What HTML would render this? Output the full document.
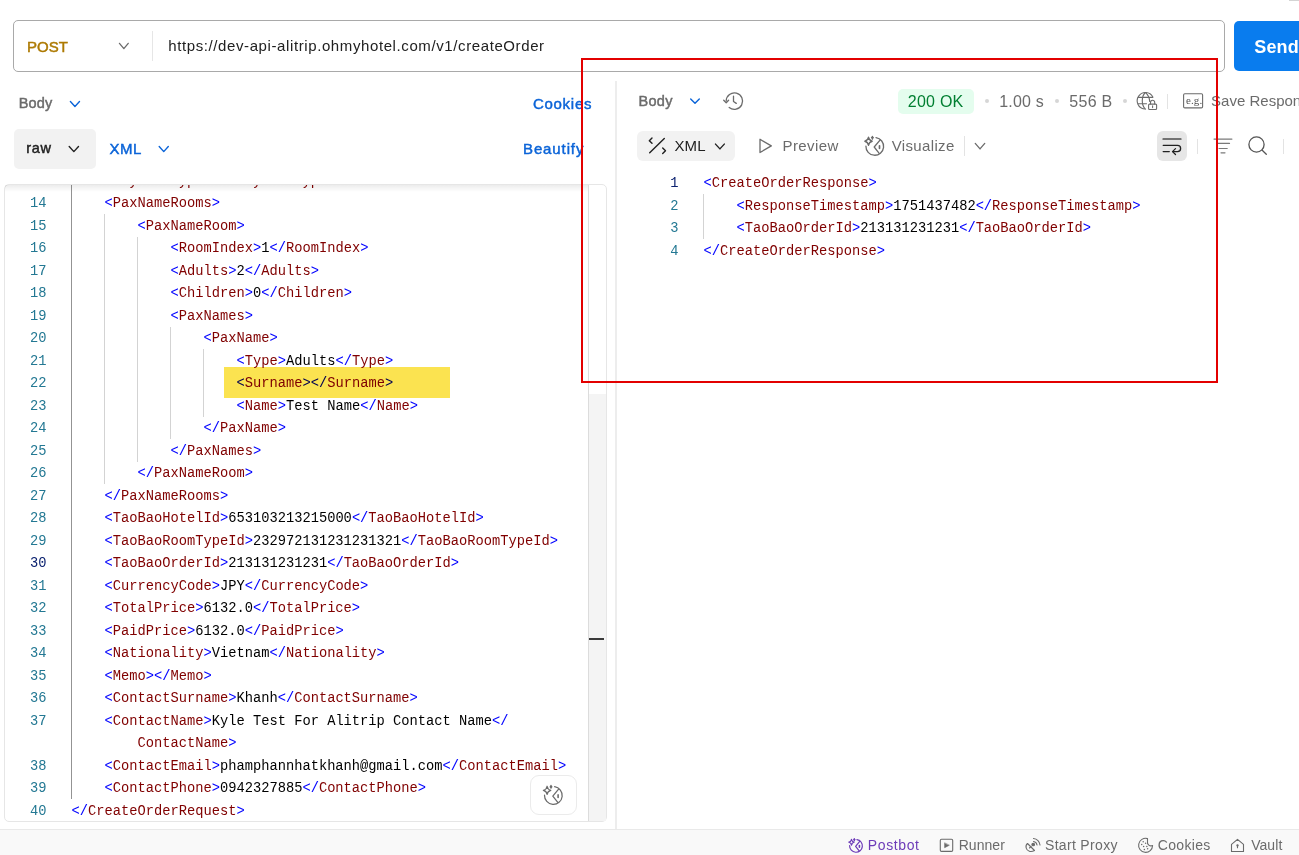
<!DOCTYPE html><html><head><meta charset="utf-8"><style>
html,body{margin:0;padding:0;}
body{width:1299px;height:855px;position:relative;overflow:hidden;background:#fff;font-family:"Liberation Sans",sans-serif;}
.t{position:absolute;white-space:nowrap;}
.m{position:absolute;white-space:pre;font-family:"Liberation Mono",monospace;font-size:13.743px;line-height:22.5px;height:22.5px;}
.ic{position:absolute;left:0;top:0;pointer-events:none;}
</style></head><body>
<div style="position:absolute;left:1289px;top:0px;width:10px;height:1px;background:#d4d4d4;"></div>
<div style="position:absolute;left:13px;top:20px;width:1212px;height:52px;box-sizing:border-box;border:1px solid #a9a9a9;border-radius:5px;background:#fff;"></div>
<div class="t" style="left:26.89px;top:39px;font-size:15px;line-height:15px;color:#ad7a03;letter-spacing:0.062px;-webkit-text-stroke:0.45px #ad7a03;">POST</div>
<svg class="ic" width="1299" height="855" viewBox="0 0 1299 855" fill="none" stroke="#6b6b6b" stroke-width="1.3" stroke-linecap="round" stroke-linejoin="round"><path d="M119.45 43.35 L123.85 48.65 L128.25 43.35"/></svg>
<div style="position:absolute;left:152px;top:31px;width:1px;height:30px;background:#e6e6e6;"></div>
<div class="t" style="left:168.25px;top:38px;font-size:15px;line-height:15px;color:#212121;letter-spacing:0.602px;">https://dev-api-alitrip.ohmyhotel.com/v1/createOrder</div>
<div style="position:absolute;left:1234px;top:21px;width:70px;height:50px;background:#097cee;border-radius:5px;"></div>
<div class="t" style="left:1254.36px;top:38px;font-size:18px;line-height:18px;color:#ffffff;font-weight:700;letter-spacing:0.100px;">Send</div>
<div class="t" style="left:18.63px;top:96px;font-size:14.5px;line-height:14.5px;color:#6b6b6b;letter-spacing:0.174px;-webkit-text-stroke:0.45px #6b6b6b;">Body</div>
<svg class="ic" width="1299" height="855" viewBox="0 0 1299 855" fill="none" stroke="#0b64d8" stroke-width="1.4" stroke-linecap="round" stroke-linejoin="round"><path d="M70.40 101.60 L74.95 106.40 L79.50 101.60"/></svg>
<div class="t" style="left:532.88px;top:96px;font-size:15px;line-height:15px;color:#0b64d8;letter-spacing:0.740px;-webkit-text-stroke:0.45px #0b64d8;">Cookies</div>
<div style="position:absolute;left:14px;top:129px;width:82px;height:40px;background:#f2f2f2;border-radius:5px;"></div>
<div class="t" style="left:26.28px;top:141px;font-size:14.5px;line-height:14.5px;color:#212121;letter-spacing:0.637px;-webkit-text-stroke:0.45px #212121;">raw</div>
<svg class="ic" width="1299" height="855" viewBox="0 0 1299 855" fill="none" stroke="#212121" stroke-width="1.4" stroke-linecap="round" stroke-linejoin="round"><path d="M69.20 146.50 L73.85 151.60 L78.50 146.50"/></svg>
<div class="t" style="left:109.59px;top:141px;font-size:15px;line-height:15px;color:#0b64d8;letter-spacing:0.425px;-webkit-text-stroke:0.45px #0b64d8;">XML</div>
<svg class="ic" width="1299" height="855" viewBox="0 0 1299 855" fill="none" stroke="#0b64d8" stroke-width="1.4" stroke-linecap="round" stroke-linejoin="round"><path d="M159.20 146.50 L163.75 151.60 L168.30 146.50"/></svg>
<div class="t" style="left:522.99px;top:141px;font-size:15px;line-height:15px;color:#0b64d8;letter-spacing:0.891px;-webkit-text-stroke:0.45px #0b64d8;">Beautify</div>
<div style="position:absolute;left:615px;top:81px;width:2px;height:748px;background:#ededed;"></div>
<div style="position:absolute;left:4px;top:184px;width:603px;height:638px;box-sizing:border-box;border:1px solid #e6e6e6;border-radius:5px;background:#fff;"></div>
<div style="position:absolute;left:5px;top:185px;width:583px;height:636px;overflow:hidden;">
<div style="position:absolute;left:66px;top:0.0px;width:1px;height:614.1px;background:#939393;"></div>
<div style="position:absolute;left:99px;top:29.1px;width:1px;height:270.0px;background:#d3d3d3;"></div>
<div style="position:absolute;left:132px;top:51.6px;width:1px;height:225.0px;background:#d3d3d3;"></div>
<div style="position:absolute;left:165px;top:141.6px;width:1px;height:112.5px;background:#d3d3d3;"></div>
<div style="position:absolute;left:198px;top:164.1px;width:1px;height:67.5px;background:#d3d3d3;"></div>
<div class="m" style="left:-18.50px;top:-14.41px;width:60px;text-align:right;color:#237893;">13</div>
<div class="m" style="left:99.59px;top:-14.41px;"><span style="color:#0000ff">&lt;</span><span style="color:#800000">PaymentType</span><span style="color:#0000ff">&gt;</span><span style="color:#000000">1</span><span style="color:#0000ff">&lt;/</span><span style="color:#800000">PaymentType</span><span style="color:#0000ff">&gt;</span></div>
<div class="m" style="left:-18.50px;top:8.09px;width:60px;text-align:right;color:#237893;">14</div>
<div class="m" style="left:99.59px;top:8.09px;"><span style="color:#0000ff">&lt;</span><span style="color:#800000">PaxNameRooms</span><span style="color:#0000ff">&gt;</span></div>
<div class="m" style="left:-18.50px;top:30.59px;width:60px;text-align:right;color:#237893;">15</div>
<div class="m" style="left:132.58px;top:30.59px;"><span style="color:#0000ff">&lt;</span><span style="color:#800000">PaxNameRoom</span><span style="color:#0000ff">&gt;</span></div>
<div class="m" style="left:-18.50px;top:53.09px;width:60px;text-align:right;color:#237893;">16</div>
<div class="m" style="left:165.57px;top:53.09px;"><span style="color:#0000ff">&lt;</span><span style="color:#800000">RoomIndex</span><span style="color:#0000ff">&gt;</span><span style="color:#000000">1</span><span style="color:#0000ff">&lt;/</span><span style="color:#800000">RoomIndex</span><span style="color:#0000ff">&gt;</span></div>
<div class="m" style="left:-18.50px;top:75.59px;width:60px;text-align:right;color:#237893;">17</div>
<div class="m" style="left:165.57px;top:75.59px;"><span style="color:#0000ff">&lt;</span><span style="color:#800000">Adults</span><span style="color:#0000ff">&gt;</span><span style="color:#000000">2</span><span style="color:#0000ff">&lt;/</span><span style="color:#800000">Adults</span><span style="color:#0000ff">&gt;</span></div>
<div class="m" style="left:-18.50px;top:98.09px;width:60px;text-align:right;color:#237893;">18</div>
<div class="m" style="left:165.57px;top:98.09px;"><span style="color:#0000ff">&lt;</span><span style="color:#800000">Children</span><span style="color:#0000ff">&gt;</span><span style="color:#000000">0</span><span style="color:#0000ff">&lt;/</span><span style="color:#800000">Children</span><span style="color:#0000ff">&gt;</span></div>
<div class="m" style="left:-18.50px;top:120.59px;width:60px;text-align:right;color:#237893;">19</div>
<div class="m" style="left:165.57px;top:120.59px;"><span style="color:#0000ff">&lt;</span><span style="color:#800000">PaxNames</span><span style="color:#0000ff">&gt;</span></div>
<div class="m" style="left:-18.50px;top:143.09px;width:60px;text-align:right;color:#237893;">20</div>
<div class="m" style="left:198.55px;top:143.09px;"><span style="color:#0000ff">&lt;</span><span style="color:#800000">PaxName</span><span style="color:#0000ff">&gt;</span></div>
<div class="m" style="left:-18.50px;top:165.59px;width:60px;text-align:right;color:#237893;">21</div>
<div class="m" style="left:231.54px;top:165.59px;"><span style="color:#0000ff">&lt;</span><span style="color:#800000">Type</span><span style="color:#0000ff">&gt;</span><span style="color:#000000">Adults</span><span style="color:#0000ff">&lt;/</span><span style="color:#800000">Type</span><span style="color:#0000ff">&gt;</span></div>
<div class="m" style="left:-18.50px;top:188.09px;width:60px;text-align:right;color:#237893;">22</div>
<div class="m" style="left:231.54px;top:188.09px;"><span style="color:#0000ff">&lt;</span><span style="color:#800000">Surname</span><span style="color:#0000ff">&gt;&lt;/</span><span style="color:#800000">Surname</span><span style="color:#0000ff">&gt;</span></div>
<div class="m" style="left:-18.50px;top:210.59px;width:60px;text-align:right;color:#237893;">23</div>
<div class="m" style="left:231.54px;top:210.59px;"><span style="color:#0000ff">&lt;</span><span style="color:#800000">Name</span><span style="color:#0000ff">&gt;</span><span style="color:#000000">Test Name</span><span style="color:#0000ff">&lt;/</span><span style="color:#800000">Name</span><span style="color:#0000ff">&gt;</span></div>
<div class="m" style="left:-18.50px;top:233.09px;width:60px;text-align:right;color:#237893;">24</div>
<div class="m" style="left:198.55px;top:233.09px;"><span style="color:#0000ff">&lt;/</span><span style="color:#800000">PaxName</span><span style="color:#0000ff">&gt;</span></div>
<div class="m" style="left:-18.50px;top:255.59px;width:60px;text-align:right;color:#237893;">25</div>
<div class="m" style="left:165.57px;top:255.59px;"><span style="color:#0000ff">&lt;/</span><span style="color:#800000">PaxNames</span><span style="color:#0000ff">&gt;</span></div>
<div class="m" style="left:-18.50px;top:278.09px;width:60px;text-align:right;color:#237893;">26</div>
<div class="m" style="left:132.58px;top:278.09px;"><span style="color:#0000ff">&lt;/</span><span style="color:#800000">PaxNameRoom</span><span style="color:#0000ff">&gt;</span></div>
<div class="m" style="left:-18.50px;top:300.59px;width:60px;text-align:right;color:#237893;">27</div>
<div class="m" style="left:99.59px;top:300.59px;"><span style="color:#0000ff">&lt;/</span><span style="color:#800000">PaxNameRooms</span><span style="color:#0000ff">&gt;</span></div>
<div class="m" style="left:-18.50px;top:323.09px;width:60px;text-align:right;color:#237893;">28</div>
<div class="m" style="left:99.59px;top:323.09px;"><span style="color:#0000ff">&lt;</span><span style="color:#800000">TaoBaoHotelId</span><span style="color:#0000ff">&gt;</span><span style="color:#000000">653103213215000</span><span style="color:#0000ff">&lt;/</span><span style="color:#800000">TaoBaoHotelId</span><span style="color:#0000ff">&gt;</span></div>
<div class="m" style="left:-18.50px;top:345.59px;width:60px;text-align:right;color:#237893;">29</div>
<div class="m" style="left:99.59px;top:345.59px;"><span style="color:#0000ff">&lt;</span><span style="color:#800000">TaoBaoRoomTypeId</span><span style="color:#0000ff">&gt;</span><span style="color:#000000">232972131231231321</span><span style="color:#0000ff">&lt;/</span><span style="color:#800000">TaoBaoRoomTypeId</span><span style="color:#0000ff">&gt;</span></div>
<div class="m" style="left:-18.50px;top:368.09px;width:60px;text-align:right;color:#0b216f;">30</div>
<div class="m" style="left:99.59px;top:368.09px;"><span style="color:#0000ff">&lt;</span><span style="color:#800000">TaoBaoOrderId</span><span style="color:#0000ff">&gt;</span><span style="color:#000000">213131231231</span><span style="color:#0000ff">&lt;/</span><span style="color:#800000">TaoBaoOrderId</span><span style="color:#0000ff">&gt;</span></div>
<div class="m" style="left:-18.50px;top:390.59px;width:60px;text-align:right;color:#237893;">31</div>
<div class="m" style="left:99.59px;top:390.59px;"><span style="color:#0000ff">&lt;</span><span style="color:#800000">CurrencyCode</span><span style="color:#0000ff">&gt;</span><span style="color:#000000">JPY</span><span style="color:#0000ff">&lt;/</span><span style="color:#800000">CurrencyCode</span><span style="color:#0000ff">&gt;</span></div>
<div class="m" style="left:-18.50px;top:413.09px;width:60px;text-align:right;color:#237893;">32</div>
<div class="m" style="left:99.59px;top:413.09px;"><span style="color:#0000ff">&lt;</span><span style="color:#800000">TotalPrice</span><span style="color:#0000ff">&gt;</span><span style="color:#000000">6132.0</span><span style="color:#0000ff">&lt;/</span><span style="color:#800000">TotalPrice</span><span style="color:#0000ff">&gt;</span></div>
<div class="m" style="left:-18.50px;top:435.59px;width:60px;text-align:right;color:#237893;">33</div>
<div class="m" style="left:99.59px;top:435.59px;"><span style="color:#0000ff">&lt;</span><span style="color:#800000">PaidPrice</span><span style="color:#0000ff">&gt;</span><span style="color:#000000">6132.0</span><span style="color:#0000ff">&lt;/</span><span style="color:#800000">PaidPrice</span><span style="color:#0000ff">&gt;</span></div>
<div class="m" style="left:-18.50px;top:458.09px;width:60px;text-align:right;color:#237893;">34</div>
<div class="m" style="left:99.59px;top:458.09px;"><span style="color:#0000ff">&lt;</span><span style="color:#800000">Nationality</span><span style="color:#0000ff">&gt;</span><span style="color:#000000">Vietnam</span><span style="color:#0000ff">&lt;/</span><span style="color:#800000">Nationality</span><span style="color:#0000ff">&gt;</span></div>
<div class="m" style="left:-18.50px;top:480.59px;width:60px;text-align:right;color:#237893;">35</div>
<div class="m" style="left:99.59px;top:480.59px;"><span style="color:#0000ff">&lt;</span><span style="color:#800000">Memo</span><span style="color:#0000ff">&gt;&lt;/</span><span style="color:#800000">Memo</span><span style="color:#0000ff">&gt;</span></div>
<div class="m" style="left:-18.50px;top:503.09px;width:60px;text-align:right;color:#237893;">36</div>
<div class="m" style="left:99.59px;top:503.09px;"><span style="color:#0000ff">&lt;</span><span style="color:#800000">ContactSurname</span><span style="color:#0000ff">&gt;</span><span style="color:#000000">Khanh</span><span style="color:#0000ff">&lt;/</span><span style="color:#800000">ContactSurname</span><span style="color:#0000ff">&gt;</span></div>
<div class="m" style="left:-18.50px;top:525.59px;width:60px;text-align:right;color:#237893;">37</div>
<div class="m" style="left:99.59px;top:525.59px;"><span style="color:#0000ff">&lt;</span><span style="color:#800000">ContactName</span><span style="color:#0000ff">&gt;</span><span style="color:#000000">Kyle Test For Alitrip Contact Name</span><span style="color:#0000ff">&lt;/</span></div>
<div class="m" style="left:132.58px;top:548.09px;"><span style="color:#800000">ContactName</span><span style="color:#0000ff">&gt;</span></div>
<div class="m" style="left:-18.50px;top:570.59px;width:60px;text-align:right;color:#237893;">38</div>
<div class="m" style="left:99.59px;top:570.59px;"><span style="color:#0000ff">&lt;</span><span style="color:#800000">ContactEmail</span><span style="color:#0000ff">&gt;</span><span style="color:#000000">phamphannhatkhanh@gmail.com</span><span style="color:#0000ff">&lt;/</span><span style="color:#800000">ContactEmail</span><span style="color:#0000ff">&gt;</span></div>
<div class="m" style="left:-18.50px;top:593.09px;width:60px;text-align:right;color:#237893;">39</div>
<div class="m" style="left:99.59px;top:593.09px;"><span style="color:#0000ff">&lt;</span><span style="color:#800000">ContactPhone</span><span style="color:#0000ff">&gt;</span><span style="color:#000000">0942327885</span><span style="color:#0000ff">&lt;/</span><span style="color:#800000">ContactPhone</span><span style="color:#0000ff">&gt;</span></div>
<div class="m" style="left:-18.50px;top:615.59px;width:60px;text-align:right;color:#237893;">40</div>
<div class="m" style="left:66.60px;top:615.59px;"><span style="color:#0000ff">&lt;/</span><span style="color:#800000">CreateOrderRequest</span><span style="color:#0000ff">&gt;</span></div>
</div>
<div style="position:absolute;left:224px;top:367px;width:226px;height:31px;background:#fbe350;mix-blend-mode:multiply;"></div>
<div style="position:absolute;left:5px;top:185px;width:583px;height:7px;background:linear-gradient(rgba(0,0,0,0.075),rgba(0,0,0,0));"></div>
<div style="position:absolute;left:588px;top:185px;width:1px;height:636px;background:#dcdcdc;"></div>
<div style="position:absolute;left:589px;top:394px;width:17px;height:427px;background:#f4f4f4;"></div>
<div style="position:absolute;left:589px;top:638px;width:15px;height:2px;background:#3a3a3a;"></div>
<div style="position:absolute;left:530px;top:775px;width:47px;height:40px;box-sizing:border-box;border:1px solid #ebebeb;border-radius:9px;background:#fff;"></div>
<svg class="ic" width="1299" height="855" viewBox="0 0 1299 855" fill="none" stroke="#6b6b6b" stroke-width="1.25" stroke-linecap="round" stroke-linejoin="round"><path d="M554.63 786.74 A8.85 8.85 0 1 1 544.51 795.19"/><path d="M558.80 788.90 L552.80 796.10 L557.80 802.40"/><path d="M558.10 794.90 L558.10 797.40" stroke-width="1.62"/><path d="M547.1 786.25 Q547.692 789.6940000000001 550.8000000000001 790.35 Q547.692 791.006 547.1 794.45 Q546.508 791.006 543.4 790.35 Q546.508 789.6940000000001 547.1 786.25 Z"/><path d="M551.0 785.4 Q551.144 786.5759999999999 551.9 786.8 Q551.144 787.024 551.0 788.1999999999999 Q550.856 787.024 550.1 786.8 Q550.856 786.5759999999999 551.0 785.4 Z" fill="#6b6b6b"/></svg>
<div class="t" style="left:638.53px;top:94px;font-size:14.5px;line-height:14.5px;color:#6b6b6b;letter-spacing:0.308px;-webkit-text-stroke:0.45px #6b6b6b;">Body</div>
<svg class="ic" width="1299" height="855" viewBox="0 0 1299 855" fill="none" stroke="#0b64d8" stroke-width="1.4" stroke-linecap="round" stroke-linejoin="round"><path d="M690.70 98.90 L695.00 103.30 L699.30 98.90"/></svg>
<svg class="ic" width="1299" height="855" viewBox="0 0 1299 855" fill="none" stroke="#6b6b6b" stroke-width="1.3" stroke-linecap="round" stroke-linejoin="round"><path d="M726.2 100.8 A8.2 8.2 0 1 1 729.2 107.5"/><path d="M723.7 100.3 L726.2 102.8 L728.6 100.3"/><path d="M733.5 96.2 L733.5 101.5 L736.3 103.4"/></svg>
<div style="position:absolute;left:898px;top:89px;width:76px;height:25px;background:#e4fdee;border-radius:5px;"></div>
<div class="t" style="left:907.80px;top:94px;font-size:16px;line-height:16px;color:#007f31;letter-spacing:0.244px;">200 OK</div>
<div style="position:absolute;left:984.5px;top:99.2px;width:4px;height:4px;background:#d6d6d6;border-radius:50%;"></div>
<div style="position:absolute;left:1054.5px;top:99.2px;width:4px;height:4px;background:#d6d6d6;border-radius:50%;"></div>
<div style="position:absolute;left:1122.6px;top:99.2px;width:4px;height:4px;background:#d6d6d6;border-radius:50%;"></div>
<div class="t" style="left:999.30px;top:94px;font-size:16px;line-height:16px;color:#6b6b6b;letter-spacing:0.172px;">1.00 s</div>
<div class="t" style="left:1069.36px;top:94px;font-size:16px;line-height:16px;color:#6b6b6b;letter-spacing:0.235px;">556 B</div>
<svg class="ic" width="1299" height="855" viewBox="0 0 1299 855" fill="none" stroke="#6b6b6b" stroke-width="1.1" stroke-linecap="round" stroke-linejoin="round"><path d="M1152.83 96.90 A8.3 8.3 0 1 0 1144.49 109.04"/><path d="M1145.5 92.5 C1141.2 96 1141.2 105.6 1145.5 109.1"/><path d="M1145.5 92.5 C1148.3 95 1149.5 98 1149.7 101.5"/><path d="M1138.3 97.4 L1152.7 97.4"/><path d="M1138.3 103.7 L1146.5 103.7"/><rect x="1148.6" y="104.1" width="8" height="5.4" rx="1"/><path d="M1150.5 104 L1150.5 102.4 A2.1 2.1 0 0 1 1154.7 102.4 L1154.7 104"/><path d="M1152.6 105.8 L1152.6 107.6"/></svg>
<div style="position:absolute;left:1167px;top:94px;width:1px;height:15px;background:#e3e3e3;"></div>
<svg class="ic" width="1299" height="855" viewBox="0 0 1299 855" fill="none" stroke="#6b6b6b" stroke-width="1.1" stroke-linecap="round" stroke-linejoin="round"><rect x="1183.6" y="93.7" width="19" height="14.2" rx="1.2"/></svg>
<div class="t" style="left:1186px;top:95px;font-family:'Liberation Serif',serif;font-size:11px;line-height:11px;color:#555;letter-spacing:0.1px;">e.g.</div>
<div class="t" style="left:1211.12px;top:93px;font-size:15px;line-height:15px;color:#6b6b6b;">Save Response</div>
<div style="position:absolute;left:637px;top:131px;width:98px;height:30px;background:#f2f2f2;border-radius:6px;"></div>
<svg class="ic" width="1299" height="855" viewBox="0 0 1299 855" fill="none" stroke="#212121" stroke-width="1.4" stroke-linecap="round" stroke-linejoin="round"><path d="M652 138 L649.3 140.7 L652 143.3"/><path d="M649.7 152.8 L664.3 138.5"/><path d="M662.7 148 L665.5 150.8 L662.7 153.6"/></svg>
<div class="t" style="left:674.46px;top:138px;font-size:15px;line-height:15px;color:#212121;letter-spacing:0.100px;">XML</div>
<svg class="ic" width="1299" height="855" viewBox="0 0 1299 855" fill="none" stroke="#212121" stroke-width="1.4" stroke-linecap="round" stroke-linejoin="round"><path d="M715.50 144.10 L719.90 148.90 L724.30 144.10"/></svg>
<svg class="ic" width="1299" height="855" viewBox="0 0 1299 855" fill="none" stroke="#6b6b6b" stroke-width="1.3" stroke-linecap="round" stroke-linejoin="round"><path d="M760 139.3 L760 152.5 L771.3 145.9 Z"/></svg>
<div class="t" style="left:782.46px;top:138px;font-size:15px;line-height:15px;color:#6b6b6b;letter-spacing:0.423px;">Preview</div>
<svg class="ic" width="1299" height="855" viewBox="0 0 1299 855" fill="none" stroke="#6b6b6b" stroke-width="1.3" stroke-linecap="round" stroke-linejoin="round"><path d="M876.03 137.64 A8.85 8.85 0 1 1 865.91 146.09"/><path d="M880.20 139.80 L874.20 147.00 L879.20 153.30"/><path d="M879.50 145.80 L879.50 148.30" stroke-width="1.69"/><path d="M868.5 137.15 Q869.092 140.594 872.2 141.25 Q869.092 141.906 868.5 145.35 Q867.908 141.906 864.8 141.25 Q867.908 140.594 868.5 137.15 Z"/><path d="M872.4 136.29999999999998 Q872.544 137.476 873.3 137.7 Q872.544 137.92399999999998 872.4 139.1 Q872.256 137.92399999999998 871.5 137.7 Q872.256 137.476 872.4 136.29999999999998 Z" fill="#6b6b6b"/></svg>
<div class="t" style="left:891.72px;top:138px;font-size:15px;line-height:15px;color:#6b6b6b;letter-spacing:0.347px;">Visualize</div>
<div style="position:absolute;left:964px;top:136px;width:1px;height:20px;background:#e3e3e3;"></div>
<svg class="ic" width="1299" height="855" viewBox="0 0 1299 855" fill="none" stroke="#6b6b6b" stroke-width="1.3" stroke-linecap="round" stroke-linejoin="round"><path d="M975.25 143.45 L980.00 148.95 L984.75 143.45"/></svg>
<div style="position:absolute;left:1157px;top:131px;width:30px;height:30px;background:#e6e6e6;border-radius:6px;"></div>
<svg class="ic" width="1299" height="855" viewBox="0 0 1299 855" fill="none" stroke="#212121" stroke-width="1.3" stroke-linecap="round" stroke-linejoin="round"><path d="M1163.2 139 L1180.8 139" stroke="#4d4d4d" stroke-width="1.7"/><path d="M1163.2 145.35 L1177.5 145.35 A3.1 3.1 0 0 1 1177.5 151.6 L1172.8 151.6"/><path d="M1175.5 148.6 L1172.5 151.6 L1175.5 154.5"/><path d="M1163.2 151.6 L1169.3 151.6"/></svg>
<div style="position:absolute;left:1197px;top:139px;width:1px;height:15px;background:#e3e3e3;"></div>
<svg class="ic" width="1299" height="855" viewBox="0 0 1299 855" fill="none" stroke="#7a7a7a" stroke-width="1.2" stroke-linecap="round" stroke-linejoin="round"><path d="M1214 139.1 L1231.9 139.1"/><path d="M1217.5 143.4 L1229.5 143.4"/><path d="M1219 148.5 L1227.2 148.5"/><path d="M1221 152.8 L1225 152.8"/></svg>
<svg class="ic" width="1299" height="855" viewBox="0 0 1299 855" fill="none" stroke="#555555" stroke-width="1.3" stroke-linecap="round" stroke-linejoin="round"><circle cx="1256.5" cy="144.5" r="7.6"/><path d="M1262.2 150.3 L1266.3 154.3"/></svg>
<div style="position:absolute;left:1283px;top:139px;width:1px;height:15px;background:#e3e3e3;"></div>
<div style="position:absolute;left:625px;top:168px;width:674px;height:640px;overflow:hidden;">
<div style="position:absolute;left:78px;top:26.1px;width:1px;height:45.0px;background:#d3d3d3;"></div>
<div class="m" style="left:-6.50px;top:5.09px;width:60px;text-align:right;color:#0b216f;">1</div>
<div class="m" style="left:78.60px;top:5.09px;"><span style="color:#0000ff">&lt;</span><span style="color:#800000">CreateOrderResponse</span><span style="color:#0000ff">&gt;</span></div>
<div class="m" style="left:-6.50px;top:27.59px;width:60px;text-align:right;color:#237893;">2</div>
<div class="m" style="left:111.59px;top:27.59px;"><span style="color:#0000ff">&lt;</span><span style="color:#800000">ResponseTimestamp</span><span style="color:#0000ff">&gt;</span><span style="color:#000000">1751437482</span><span style="color:#0000ff">&lt;/</span><span style="color:#800000">ResponseTimestamp</span><span style="color:#0000ff">&gt;</span></div>
<div class="m" style="left:-6.50px;top:50.09px;width:60px;text-align:right;color:#237893;">3</div>
<div class="m" style="left:111.59px;top:50.09px;"><span style="color:#0000ff">&lt;</span><span style="color:#800000">TaoBaoOrderId</span><span style="color:#0000ff">&gt;</span><span style="color:#000000">213131231231</span><span style="color:#0000ff">&lt;/</span><span style="color:#800000">TaoBaoOrderId</span><span style="color:#0000ff">&gt;</span></div>
<div class="m" style="left:-6.50px;top:72.59px;width:60px;text-align:right;color:#237893;">4</div>
<div class="m" style="left:78.60px;top:72.59px;"><span style="color:#0000ff">&lt;/</span><span style="color:#800000">CreateOrderResponse</span><span style="color:#0000ff">&gt;</span></div>
</div>
<div style="position:absolute;left:0px;top:829px;width:1299px;height:26px;background:#f9f9f9;border-top:1px solid #e9e9e9;box-sizing:border-box;"></div>
<svg class="ic" width="1299" height="855" viewBox="0 0 1299 855" fill="none" stroke="#6d3bb8" stroke-width="1.2" stroke-linecap="round" stroke-linejoin="round"><path d="M856.92 839.59 A6.37 6.37 0 1 1 849.63 845.68"/><path d="M859.92 841.15 L855.60 846.33 L859.20 850.87"/><path d="M859.42 845.47 L859.42 847.27" stroke-width="1.56"/><path d="M851.5 839.238 Q851.92624 841.7176800000001 854.164 842.19 Q851.92624 842.66232 851.5 845.142 Q851.07376 842.66232 848.836 842.19 Q851.07376 841.7176800000001 851.5 839.238 Z"/><path d="M854.31 838.632 Q854.41368 839.47872 854.958 839.64 Q854.41368 839.80128 854.31 840.648 Q854.2063199999999 839.80128 853.6619999999999 839.64 Q854.2063199999999 839.47872 854.31 838.632 Z" fill="#6d3bb8"/></svg>
<div class="t" style="left:867.85px;top:838px;font-size:14px;line-height:14px;color:#6d3bb8;letter-spacing:0.600px;">Postbot</div>
<svg class="ic" width="1299" height="855" viewBox="0 0 1299 855" fill="none" stroke="#6b6b6b" stroke-width="1.1" stroke-linecap="round" stroke-linejoin="round"><rect x="940.3" y="839.2" width="12.4" height="12.2" rx="1.2"/><path d="M944.6 843.2 L944.6 847.7 L949 845.4 Z" fill="#6b6b6b" stroke-width="0.6"/></svg>
<div class="t" style="left:958.64px;top:838px;font-size:14px;line-height:14px;color:#6b6b6b;letter-spacing:0.069px;">Runner</div>
<svg class="ic" width="1299" height="855" viewBox="0 0 1299 855" fill="none" stroke="#6b6b6b" stroke-width="1.1" stroke-linecap="round" stroke-linejoin="round"><path d="M1027.5 843.5 L1034.5 850.5 C1031 852.5 1027 851.5 1026.2 848 C1025.7 846.3 1026.2 844.6 1027.5 843.5 Z"/><circle cx="1033.2" cy="844.5" r="1.3" fill="#6b6b6b"/><path d="M1031 846.5 L1029.5 848"/><path d="M1033.5 841.5 A4 4 0 0 1 1037 845"/><path d="M1033.5 838.5 A7 7 0 0 1 1040 845"/></svg>
<div class="t" style="left:1044.97px;top:838px;font-size:14px;line-height:14px;color:#6b6b6b;letter-spacing:0.324px;">Start Proxy</div>
<svg class="ic" width="1299" height="855" viewBox="0 0 1299 855" fill="none" stroke="#6b6b6b" stroke-width="1.1" stroke-linecap="round" stroke-linejoin="round"><path d="M1147.5 838.6 A7 7 0 1 0 1152.6 845.5 A3.6 3.6 0 0 1 1147.5 841.5 Z"/><g fill="#6b6b6b" stroke="none"><circle cx="1143.2" cy="841.7" r="0.75"/><circle cx="1145.6" cy="843.3" r="0.75"/><circle cx="1141.7" cy="844.4" r="0.75"/><circle cx="1143.6" cy="846.5" r="0.75"/><circle cx="1146.8" cy="846.5" r="0.75"/><circle cx="1144.4" cy="849.4" r="0.75"/><circle cx="1147.6" cy="848.8" r="0.75"/></g></svg>
<div class="t" style="left:1157.70px;top:838px;font-size:14px;line-height:14px;color:#6b6b6b;letter-spacing:0.336px;">Cookies</div>
<svg class="ic" width="1299" height="855" viewBox="0 0 1299 855" fill="none" stroke="#6b6b6b" stroke-width="1.1" stroke-linecap="round" stroke-linejoin="round"><path d="M1231.5 844.3 L1237.5 839.3 L1243.5 844.3 L1243.5 851.5 L1231.5 851.5 Z"/><path d="M1237.5 845.5 L1237.5 847.8"/><circle cx="1237.5" cy="845.4" r="0.6" fill="#6b6b6b"/></svg>
<div class="t" style="left:1251.13px;top:838px;font-size:14px;line-height:14px;color:#6b6b6b;letter-spacing:0.076px;">Vault</div>
<div style="position:absolute;left:581px;top:58px;width:637px;height:325px;box-sizing:border-box;border:2px solid #e30000;"></div>
</body></html>
